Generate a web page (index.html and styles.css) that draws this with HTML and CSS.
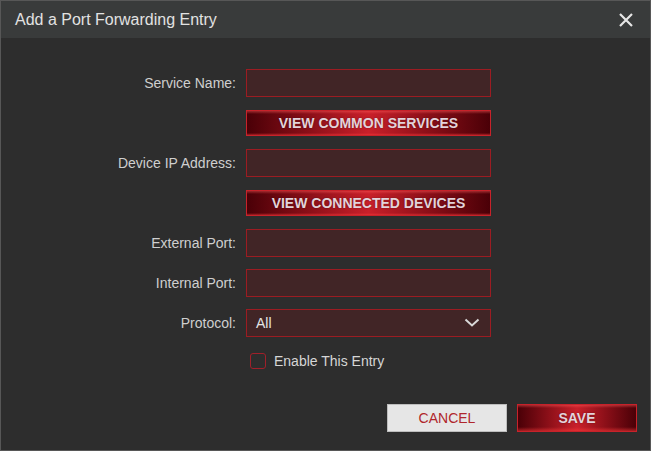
FILE: index.html
```html
<!DOCTYPE html>
<html lang="en">
<head>
  <meta charset="UTF-8" />
  <title>Add a Port Forwarding Entry</title>
  <link rel="stylesheet" href="styles.css">
</head>
<body>
  <div class="dialog">
    <div class="dialog-header">
      <span class="dialog-title">Add a Port Forwarding Entry</span>
      <span class="close-btn">
        <svg width="14" height="14" viewBox="0 0 14 14"><path d="M1 1 L13 13 M13 1 L1 13" stroke="#e6e6e6" stroke-width="2.2" fill="none"/></svg>
      </span>
    </div>

    <div class="dialog-body">
      <div class="form-row">
        <label class="field-label">Service Name:</label>
        <div class="field-input"></div>
      </div>
      <div class="form-row btn-row">
        <span></span>
        <button class="red-btn">VIEW COMMON SERVICES</button>
      </div>
      <div class="form-row">
        <label class="field-label">Device IP Address:</label>
        <div class="field-input"></div>
      </div>
      <div class="form-row btn-row">
        <span></span>
        <button class="red-btn">VIEW CONNECTED DEVICES</button>
      </div>
      <div class="form-row">
        <label class="field-label">External Port:</label>
        <div class="field-input"></div>
      </div>
      <div class="form-row">
        <label class="field-label">Internal Port:</label>
        <div class="field-input"></div>
      </div>
      <div class="form-row">
        <label class="field-label">Protocol:</label>
        <div class="field-input select">
          <span>All</span>
          <svg width="16" height="10" viewBox="0 0 16 10"><path d="M1.5 1.5 L8 7.5 L14.5 1.5" stroke="#d8d8d8" stroke-width="2" fill="none"/></svg>
        </div>
      </div>
      <div class="form-row check-row">
        <span></span>
        <label class="check"><span class="check-box"></span>Enable This Entry</label>
      </div>
    </div>

    <div class="dialog-footer">
      <button class="cancel-btn">CANCEL</button>
      <button class="red-btn save-btn">SAVE</button>
    </div>
  </div>
</body>
</html>
```

FILE: styles.css
```css
html, body {
  margin: 0;
  padding: 0;
}

body {
  font-family: 'Liberation Sans', Arial, sans-serif;
  background-color: #2d2d2d;
}

.dialog {
  width: 651px;
  height: 451px;
  box-sizing: border-box;
  border: 1px solid #575757;
  background-color: #2d2d2d;
  display: flex;
  flex-direction: column;
}

.dialog-header {
  height: 37px;
  background-color: #393b3b;
  display: flex;
  align-items: center;
  justify-content: space-between;
  padding: 0 17px 0 14px;
}

.dialog-title {
  color: #e2e2e2;
  font-size: 16px;
}

.close-btn {
  display: flex;
}

.dialog-body {
  padding-top: 31px;
  display: flex;
  flex-direction: column;
  gap: 12px;
}

.form-row {
  display: grid;
  grid-template-columns: 235px 245px;
  column-gap: 10px;
  align-items: center;
}

.btn-row {
  margin: 1px 0;
}

.field-label {
  text-align: right;
  color: #cfcfcf;
  font-size: 14px;
}

.field-input {
  height: 28px;
  box-sizing: border-box;
  background-color: #412526;
  border: 1px solid #9c1c22;
}

.select {
  display: flex;
  align-items: center;
  justify-content: space-between;
  padding: 0 10px 0 9px;
  color: #e4e4e4;
  font-size: 14px;
}

.red-btn {
  height: 26px;
  padding: 0;
  border: 1px solid #c8222a;
  background:
    linear-gradient(to bottom, rgba(255, 90, 90, 0.45) 0, rgba(255, 90, 90, 0) 3px, rgba(0, 0, 0, 0) 22px, rgba(255, 60, 60, 0.5) 100%),
    linear-gradient(to right, #4a0007 0%, #8a0f18 25%, #c9202a 50%, #8a0f18 75%, #4a0007 100%);
  color: #e3d3da;
  font-family: 'Liberation Sans', Arial, sans-serif;
  font-weight: bold;
  font-size: 14px;
  text-shadow: 0 0 2px rgba(0, 0, 0, 0.4);
}

.check-row {
  margin-top: 4px;
}

.check {
  display: flex;
  align-items: center;
  gap: 8px;
  padding-left: 4px;
  color: #d6d6d6;
  font-size: 14px;
}

.check-box {
  width: 16px;
  height: 16px;
  box-sizing: border-box;
  border: 1px solid #a0202a;
  border-radius: 3px;
}

.dialog-footer {
  margin-top: auto;
  padding: 0 13px 18px 0;
  display: flex;
  justify-content: flex-end;
  gap: 10px;
}

.cancel-btn {
  width: 120px;
  height: 28px;
  background-color: #e6e6e6;
  border: 1px solid #bdbdbd;
  color: #b0262c;
  font-family: 'Liberation Sans', Arial, sans-serif;
  font-size: 14px;
}

.save-btn {
  width: 120px;
  height: 28px;
}
```
